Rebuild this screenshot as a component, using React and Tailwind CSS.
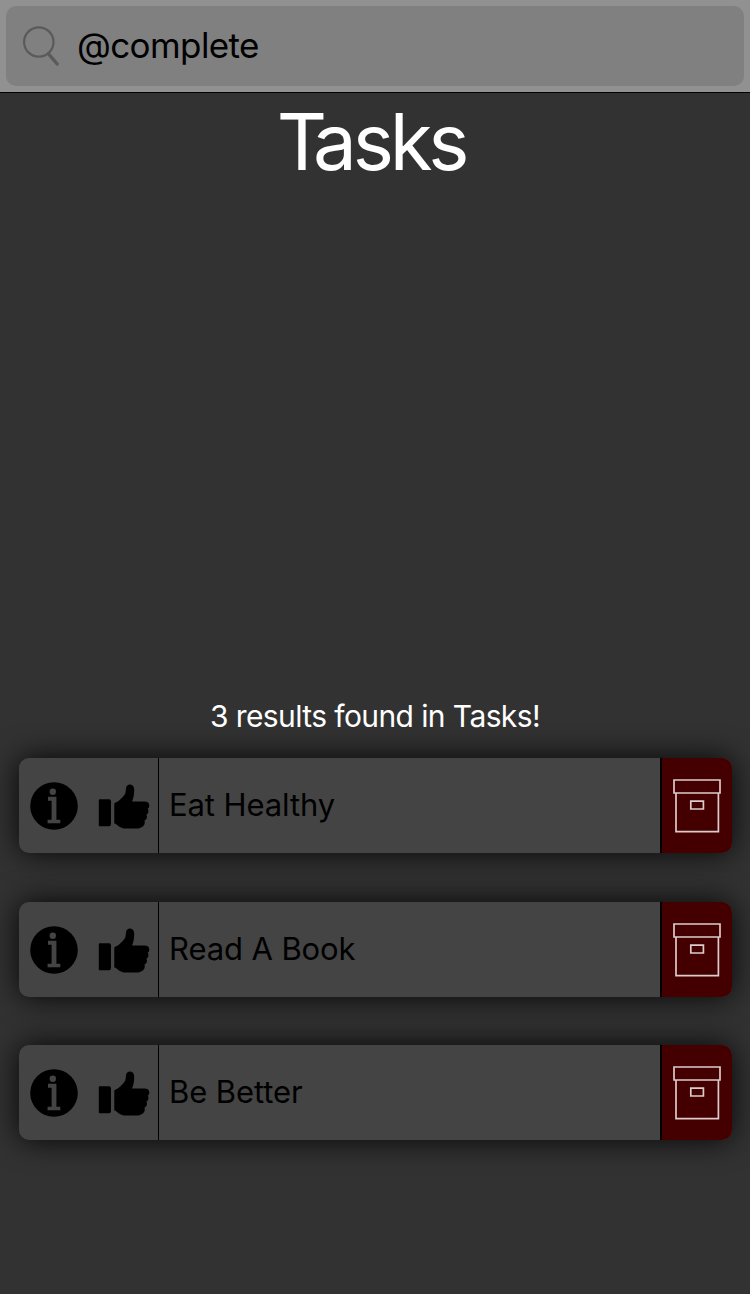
const tasks = ["Eat Healthy", "Read A Book", "Be Better"];

function SearchIcon() {
  return (
    <svg className="h-[42px] w-10 shrink-0" viewBox="0 0 40 42" fill="none" stroke="#5a5a5a" strokeLinecap="round">
      <circle cx="17.8" cy="17" r="14.7" strokeWidth="2.2" />
      <path d="M27.5 28.8L36.2 39" strokeWidth="3.4" />
    </svg>
  );
}

function InfoIcon() {
  return (
    <svg className="h-12 w-12 shrink-0" viewBox="0 0 48 48">
      <circle cx="24" cy="24" r="23.8" />
      <circle cx="22.8" cy="9.8" r="3.2" fill="#444" />
      <path d="M18 14.8H26.4V37.7H30.3V41.2H17.6V37.7H21.6V18.7H18Z" fill="#444" />
    </svg>
  );
}

function ThumbIcon() {
  return (
    <svg className="mt-px h-[46px] w-[52px] shrink-0" viewBox="0 0 52 46">
      <path d="M.8 16Q.8 15.2 1.7 15.2H11Q13 15.2 13 17.2V40Q13 42.2 11 42.2H1.7Q.8 42.2.8 41.4Z" />
      <path d="M16.3 19.3Q21 17.4 24 13.7C27.4 10.5 27.8 8.4 28 4.2C28.4 1.5 30.2.3 32.2.5C35 .8 36.3 2.7 36.2 6.3C36.2 10.5 35.5 14 34.1 17.6H46.5C49.5 17.6 51.3 19.2 51.3 21.4C51.3 23.3 50.3 24.2 49.6 24.7C51 26.1 50.8 29.5 48.3 30.6C49.8 32.7 48.8 35.7 46.4 36.7C47.6 39.4 45.8 42.4 43.5 43.3C42.2 44.2 40.8 44.5 38.7 44.5H28.2C23.2 44.5 21 42.7 18.5 40.5Q17.6 39.7 16.3 39.5Z" />
    </svg>
  );
}

function ArchiveIcon() {
  return (
    <svg className="h-[54px] w-12 shrink-0" viewBox="0 0 48 54" fill="none" stroke="#dccccc" strokeWidth="1.7">
      <path d="M1 1H47V14H1Z" />
      <path d="M3 14V52.6H45.4V14" />
      <path d="M17.8 22.2H30.4V30H17.8Z" />
    </svg>
  );
}

function TaskRow({ title }) {
  return (
    <li className="flex h-[95px] overflow-hidden rounded-[10px] bg-[#444] shadow-[0_0_30px_0_rgba(0,0,0,0.9)] last:-mt-px">
      <div className="flex w-[140px] shrink-0 items-center gap-5 border-r border-black pl-[11px] pt-px">
        <InfoIcon />
        <ThumbIcon />
      </div>
      <div className="flex grow items-center pb-0.5 pl-2.5 text-[31px] leading-none tracking-[-0.1px] text-black">
        {title}
      </div>
      <div className="flex w-[72px] shrink-0 items-center justify-center border-l-2 border-black bg-[#440000] pt-px">
        <ArchiveIcon />
      </div>
    </li>
  );
}

export default function App() {
  return (
    <main className="flex h-[1294px] w-[750px] flex-col overflow-hidden bg-[#323232] font-['Inter','Liberation_Sans',sans-serif]">
      <header className="h-[93px] shrink-0 border-b border-black bg-[#919191] p-1.5">
        <div className="flex h-20 items-center rounded-[10px] bg-[#808080] pl-[15px]">
          <SearchIcon />
          <span className="pb-0.5 pl-4 text-[35px] leading-none tracking-[-0.6px] text-black">@complete</span>
        </div>
      </header>
      <h1 className="h-[604px] shrink-0 pr-[8px] pt-[9px] text-center text-[78px] leading-[80px] tracking-[-4.2px] text-white">
        <span className="tracking-[-14px]">T</span>asks
      </h1>
      <p className="h-[61px] shrink-0 text-center text-[30px] leading-[39px] tracking-[-0.6px] text-white">3 results found in Tasks!</p>
      <ul className="flex flex-col gap-[49px] pl-[19px] pr-[18px]">
        {tasks.map((title) => (
          <TaskRow key={title} title={title} />
        ))}
      </ul>
    </main>
  );
}
